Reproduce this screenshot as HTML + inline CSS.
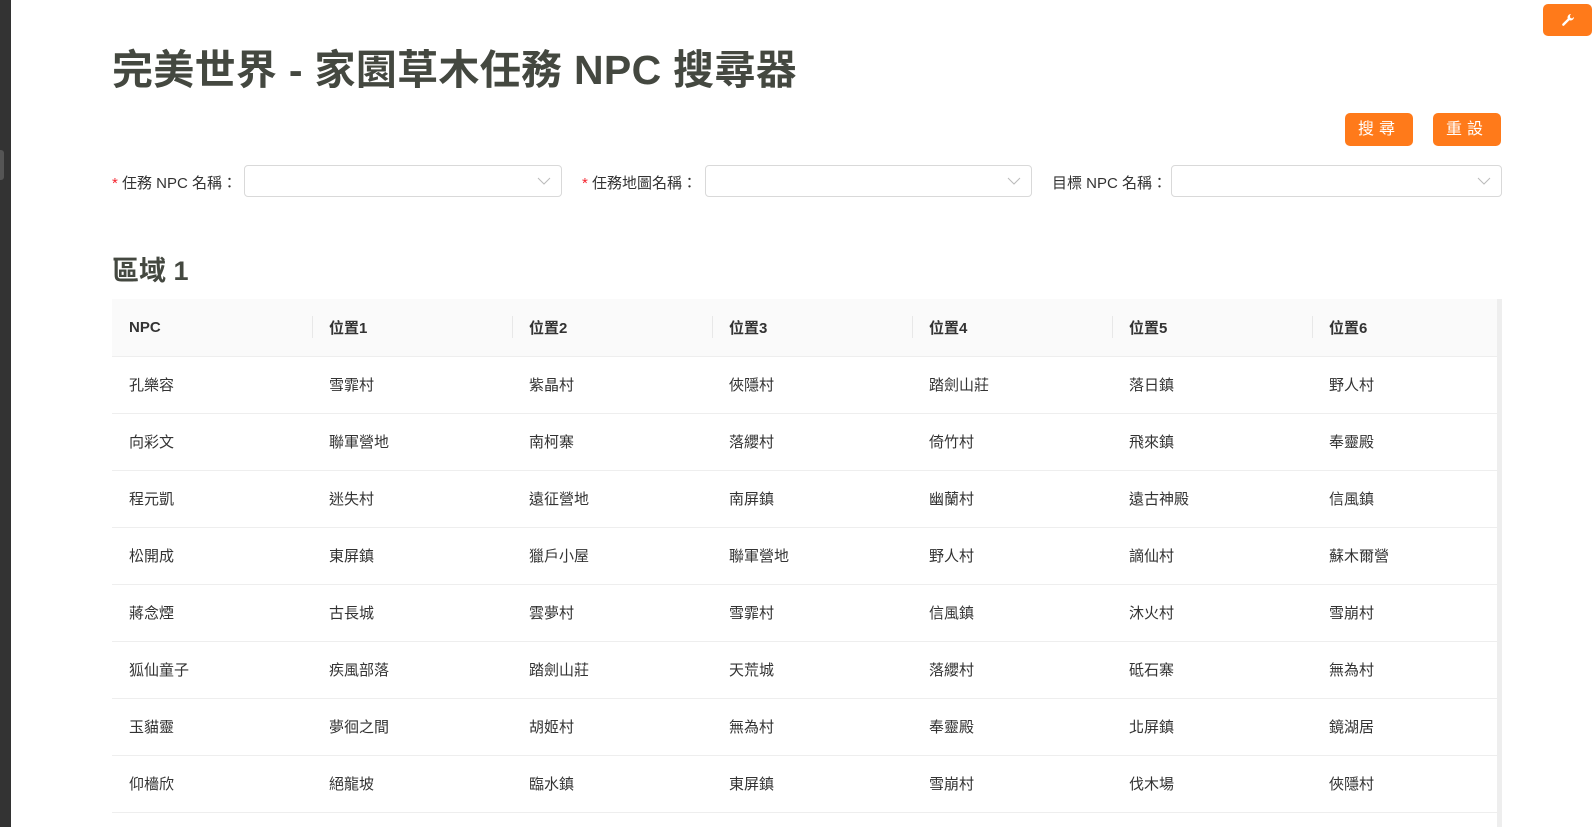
<!DOCTYPE html>
<html><head><meta charset="utf-8"><style>
*{margin:0;padding:0;box-sizing:border-box}
body{width:1592px;height:827px;overflow:hidden;background:#fff;font-family:"Liberation Sans","Noto Sans CJK TC",sans-serif;color:#333;position:relative}
.side{position:absolute;left:0;top:0;width:11px;height:827px;background:#333}
.tab{position:absolute;left:0;top:150px;width:4px;height:30px;background:#555;border-radius:0 3px 3px 0}
h1{position:absolute;left:112px;top:36px;font-size:41px;font-weight:bold;color:#444840;letter-spacing:0.3px}
.btn{position:absolute;background:#ff7a1a;color:#fff;border-radius:5px;font-size:16px;text-align:center;letter-spacing:5px}
.lbl{position:absolute;top:172px;font-size:15px;color:#333}
.lbl b{color:#f5222d;font-weight:normal}
.sel{position:absolute;top:165px;height:32px;border:1px solid #d9d9d9;border-radius:4px}
.sel svg{position:absolute;right:10px;top:10px}
h2{position:absolute;left:112px;top:249px;font-size:27px;font-weight:bold;color:#444840}
table{position:absolute;left:112px;top:299px;width:1386px;border-collapse:collapse;font-size:15px;table-layout:fixed}
td,th{height:57px;padding-left:17px;text-align:left;border-bottom:1px solid #eee}
th{background:#fafafa;font-weight:bold;color:#333;position:relative;width:200px}
th:last-child{width:186px}
th+th:before{content:"";position:absolute;left:0;top:17px;height:22px;width:1px;background:#e8e8e8}
.sb{position:absolute;left:1497px;top:299px;width:5px;height:528px;background:#eee}
</style></head><body>
<div class="side"></div><div class="tab"></div>
<div class="btn" style="left:1543px;top:4px;width:49px;height:32px;letter-spacing:0"><svg width="16" height="16" viewBox="0 0 16 16" style="margin-top:8px"><path d="M11 2a3.5 3.5 0 0 0-3.3 4.6L2.5 11.8a1.2 1.2 0 0 0 1.7 1.7l5.2-5.2A3.5 3.5 0 0 0 14 5l-2 1.5-1.8-.7L10 3.5z" fill="#fff"/></svg></div>
<h1>完美世界 - 家園草木任務 NPC 搜尋器</h1>
<div class="btn" style="left:1345px;top:113px;width:68px;height:33px;line-height:33px">搜尋</div>
<div class="btn" style="left:1433px;top:113px;width:68px;height:33px;line-height:33px">重設</div>
<div class="lbl" style="left:112px"><b>*</b> 任務 NPC 名稱：</div>
<div class="sel" style="left:244px;width:318px"><svg width="14" height="10"><path d="M1 2l6 6 6-6" stroke="#bbb" fill="none"/></svg></div>
<div class="lbl" style="left:582px"><b>*</b> 任務地圖名稱：</div>
<div class="sel" style="left:705px;width:327px"><svg width="14" height="10"><path d="M1 2l6 6 6-6" stroke="#bbb" fill="none"/></svg></div>
<div class="lbl" style="left:1052px">目標 NPC 名稱：</div>
<div class="sel" style="left:1171px;width:331px"><svg width="14" height="10"><path d="M1 2l6 6 6-6" stroke="#bbb" fill="none"/></svg></div>
<h2>區域 1</h2>
<table>
<tr><th>NPC</th><th>位置1</th><th>位置2</th><th>位置3</th><th>位置4</th><th>位置5</th><th>位置6</th></tr>
<tr><td>孔樂容</td><td>雪霏村</td><td>紫晶村</td><td>俠隱村</td><td>踏劍山莊</td><td>落日鎮</td><td>野人村</td></tr>
<tr><td>向彩文</td><td>聯軍營地</td><td>南柯寨</td><td>落纓村</td><td>倚竹村</td><td>飛來鎮</td><td>奉靈殿</td></tr>
<tr><td>程元凱</td><td>迷失村</td><td>遠征營地</td><td>南屏鎮</td><td>幽蘭村</td><td>遠古神殿</td><td>信風鎮</td></tr>
<tr><td>松開成</td><td>東屏鎮</td><td>獵戶小屋</td><td>聯軍營地</td><td>野人村</td><td>謫仙村</td><td>蘇木爾營</td></tr>
<tr><td>蔣念煙</td><td>古長城</td><td>雲夢村</td><td>雪霏村</td><td>信風鎮</td><td>沐火村</td><td>雪崩村</td></tr>
<tr><td>狐仙童子</td><td>疾風部落</td><td>踏劍山莊</td><td>天荒城</td><td>落纓村</td><td>砥石寨</td><td>無為村</td></tr>
<tr><td>玉貓靈</td><td>夢徊之間</td><td>胡姬村</td><td>無為村</td><td>奉靈殿</td><td>北屏鎮</td><td>鏡湖居</td></tr>
<tr><td>仰檣欣</td><td>絕龍坡</td><td>臨水鎮</td><td>東屏鎮</td><td>雪崩村</td><td>伐木場</td><td>俠隱村</td></tr>
</table>
<div class="sb"></div>
</body></html>
